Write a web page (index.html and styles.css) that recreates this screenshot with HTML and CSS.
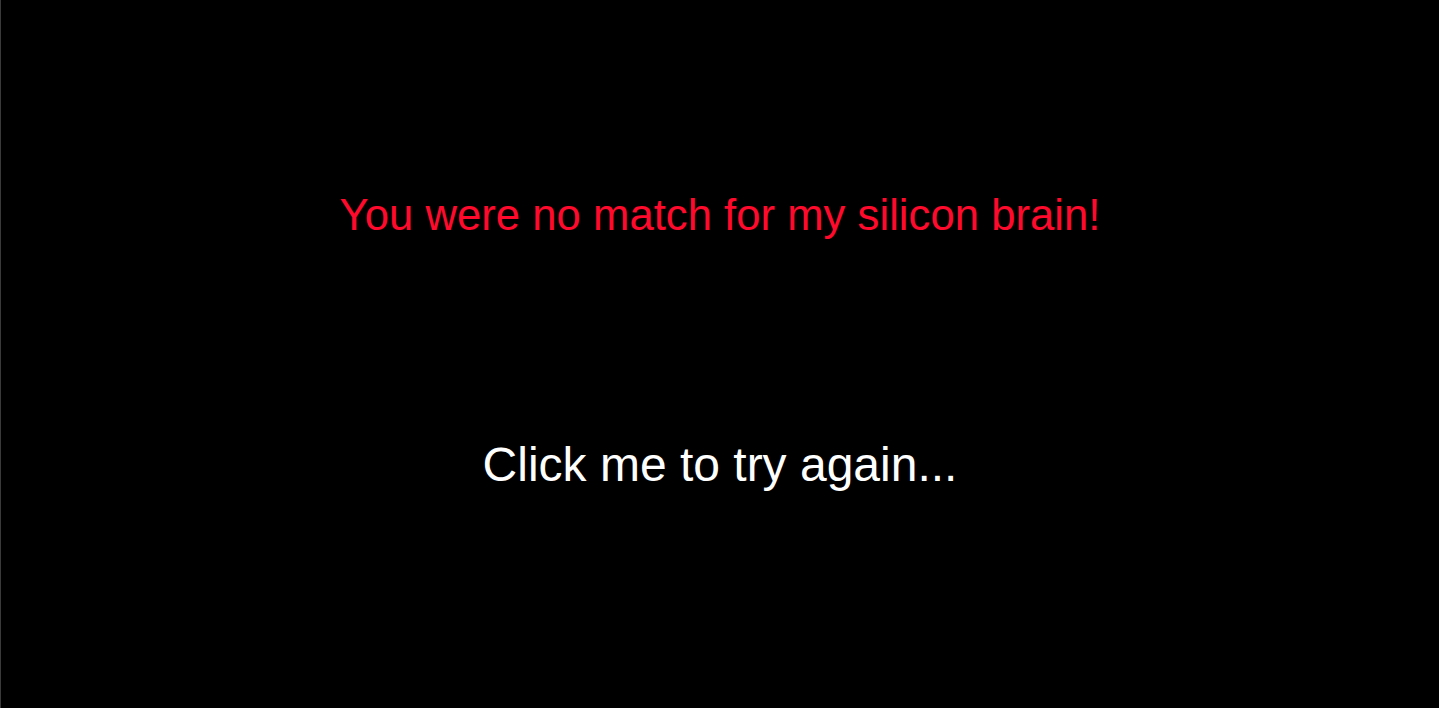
FILE: index.html
```html
<!DOCTYPE html>
<html>
<head>
<meta charset="utf-8">
<link rel="stylesheet" href="styles.css">
</head>
<body>
<div class="screen">
  <div class="message">You were no match for my silicon brain!</div>
  <div class="retry">Click me to try again...</div>
</div>
</body>
</html>
```
FILE: styles.css
```css
html, body {
  margin: 0;
  padding: 0;
  background: #000;
  height: 100%;
}
.screen {
  box-sizing: border-box;
  height: 708px;
  border-left: 1px solid #3a3a3a;
  background: #000;
  display: flex;
  flex-direction: column;
  align-items: center;
  font-family: "Liberation Sans", Arial, sans-serif;
}
.message {
  margin-top: 193px;
  font-size: 43.7px;
  line-height: 44px;
  color: #ff0a2c;
}
.retry {
  margin-top: 204px;
  font-size: 48px;
  line-height: 48px;
  color: #fff;
}
```
